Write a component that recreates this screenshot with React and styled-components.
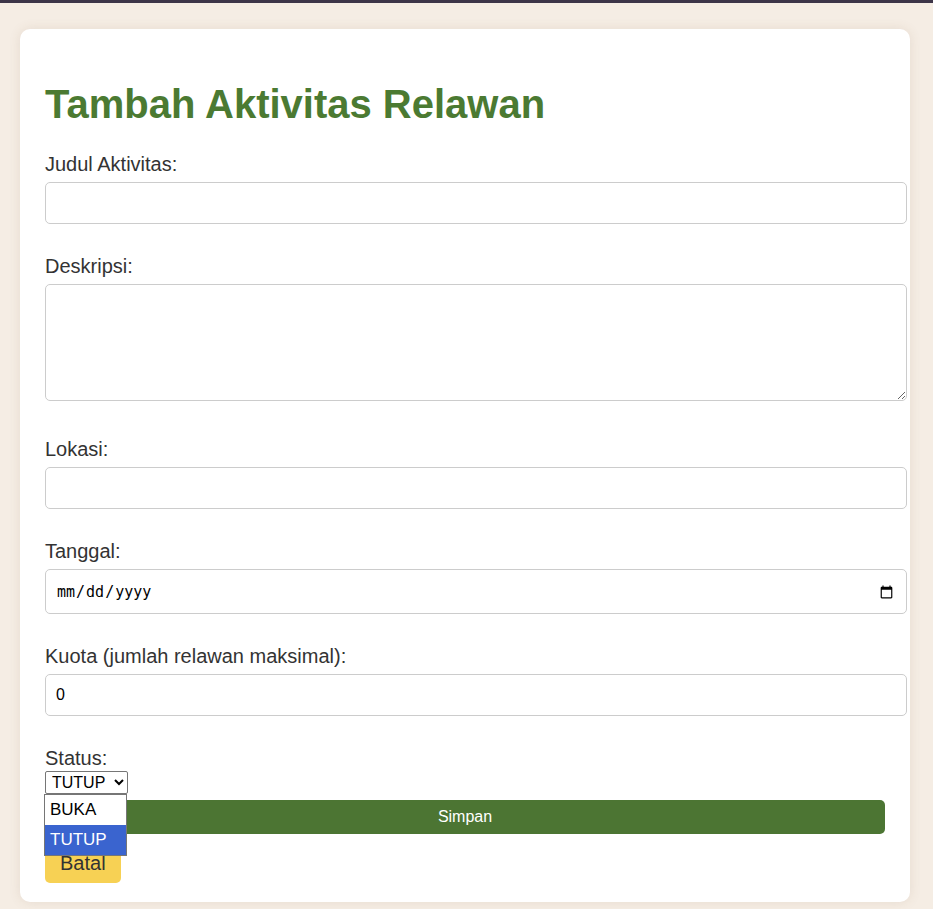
import React from 'react';
import styled, { createGlobalStyle } from 'styled-components';

const GlobalStyle = createGlobalStyle`
  body {
    margin: 0;
    background-color: #f5ede4;
    font-family: "Liberation Sans", Arial, sans-serif;
    color: #333;
  }
`;

const TopBar = styled.div`
  height: 3px;
  background-color: #3d3548;
`;

const Card = styled.div`
  width: 890px;
  box-sizing: border-box;
  margin: 26px 0 8px 20px;
  padding: 25px 25px 19px;
  background-color: #fff;
  border-radius: 10px;
  box-shadow: 0 0 12px rgba(120, 90, 60, 0.12);
`;

const Title = styled.h1`
  margin: 27px 0;
  font-size: 40px;
  font-weight: 700;
  line-height: 46px;
  color: #4b7a32;
`;

const Field = styled.div`
  margin-bottom: ${(p) => (p.$wide ? '38px' : '32px')};
`;

const Label = styled.label`
  display: block;
  margin-bottom: ${(p) => (p.$tight ? '2px' : '7px')};
  font-size: 20px;
  line-height: 21px;
  color: #333;
`;

const Input = styled.input`
  display: block;
  width: 100%;
  margin: 0;
  padding: 11px 10px;
  border: 1px solid #ccc;
  border-radius: 5px;
  font-family: "Liberation Sans", Arial, sans-serif;
  font-size: 16px;
  line-height: 18px;
  color: #000;
  background: #fff;

  &[type='date'] {
    padding: 12px 10px 11px;
    font-family: "DejaVu Sans Mono", monospace;
    font-size: 15px;
  }
`;

const TextArea = styled.textarea`
  display: block;
  width: 100%;
  height: 95px;
  margin: 0;
  padding: 10px;
  border: 1px solid #ccc;
  border-radius: 5px;
  font-family: "Liberation Sans", Arial, sans-serif;
  font-size: 16px;
  resize: vertical;
`;

const StatusWrap = styled.div`
  position: relative;
  width: 83px;
`;

const Select = styled.select`
  display: block;
  width: 83px;
  height: 23px;
  margin: 0;
  padding: 0 2px;
  border: 1px solid #767676;
  border-radius: 2px;
  font-family: "Liberation Sans", Arial, sans-serif;
  font-size: 16px;
  color: #000;
  background: #fff;
`;

const Dropdown = styled.ul`
  position: absolute;
  top: 23px;
  left: -1px;
  z-index: 5;
  width: 81px;
  margin: 0;
  padding: 0;
  list-style: none;
  border: 1px solid #767676;
  background: #fff;
`;

const Option = styled.li`
  height: 30px;
  padding-left: 5px;
  font-size: 17px;
  line-height: 30px;
  color: ${(p) => (p.$active ? '#fff' : '#000')};
  background: ${(p) => (p.$active ? '#3a64cf' : '#fff')};
`;

const Actions = styled.div`
  display: flex;
  flex-direction: column;
  align-items: flex-start;
  gap: 10px;
  margin-top: 6px;
`;

const SaveButton = styled.button`
  width: 100%;
  height: 34px;
  border: none;
  border-radius: 5px;
  background-color: #4c7533;
  color: #fff;
  font-family: "Liberation Sans", Arial, sans-serif;
  font-size: 16px;
`;

const CancelButton = styled.button`
  padding: 8px 15px;
  border: none;
  border-radius: 5px;
  background-color: #f7d154;
  color: #333;
  font-family: "Liberation Sans", Arial, sans-serif;
  font-size: 20px;
  line-height: 23px;
`;

export default function App() {
  return (
    <>
      <GlobalStyle />
      <TopBar />
      <Card>
        <Title>Tambah Aktivitas Relawan</Title>
        <form onSubmit={(e) => e.preventDefault()}>
          <Field>
            <Label htmlFor="judul">Judul Aktivitas:</Label>
            <Input id="judul" type="text" />
          </Field>
          <Field $wide>
            <Label htmlFor="deskripsi">Deskripsi:</Label>
            <TextArea id="deskripsi" />
          </Field>
          <Field>
            <Label htmlFor="lokasi">Lokasi:</Label>
            <Input id="lokasi" type="text" />
          </Field>
          <Field>
            <Label htmlFor="tanggal">Tanggal:</Label>
            <Input id="tanggal" type="date" />
          </Field>
          <Field>
            <Label htmlFor="kuota">Kuota (jumlah relawan maksimal):</Label>
            <Input id="kuota" type="number" defaultValue={0} />
          </Field>
          <Label htmlFor="status" $tight>
            Status:
          </Label>
          <StatusWrap>
            <Select id="status" defaultValue="TUTUP">
              <option value="BUKA">BUKA</option>
              <option value="TUTUP">TUTUP</option>
            </Select>
            <Dropdown>
              <Option>BUKA</Option>
              <Option $active>TUTUP</Option>
            </Dropdown>
          </StatusWrap>
          <Actions>
            <SaveButton type="submit">Simpan</SaveButton>
            <CancelButton type="button">Batal</CancelButton>
          </Actions>
        </form>
      </Card>
    </>
  );
}
